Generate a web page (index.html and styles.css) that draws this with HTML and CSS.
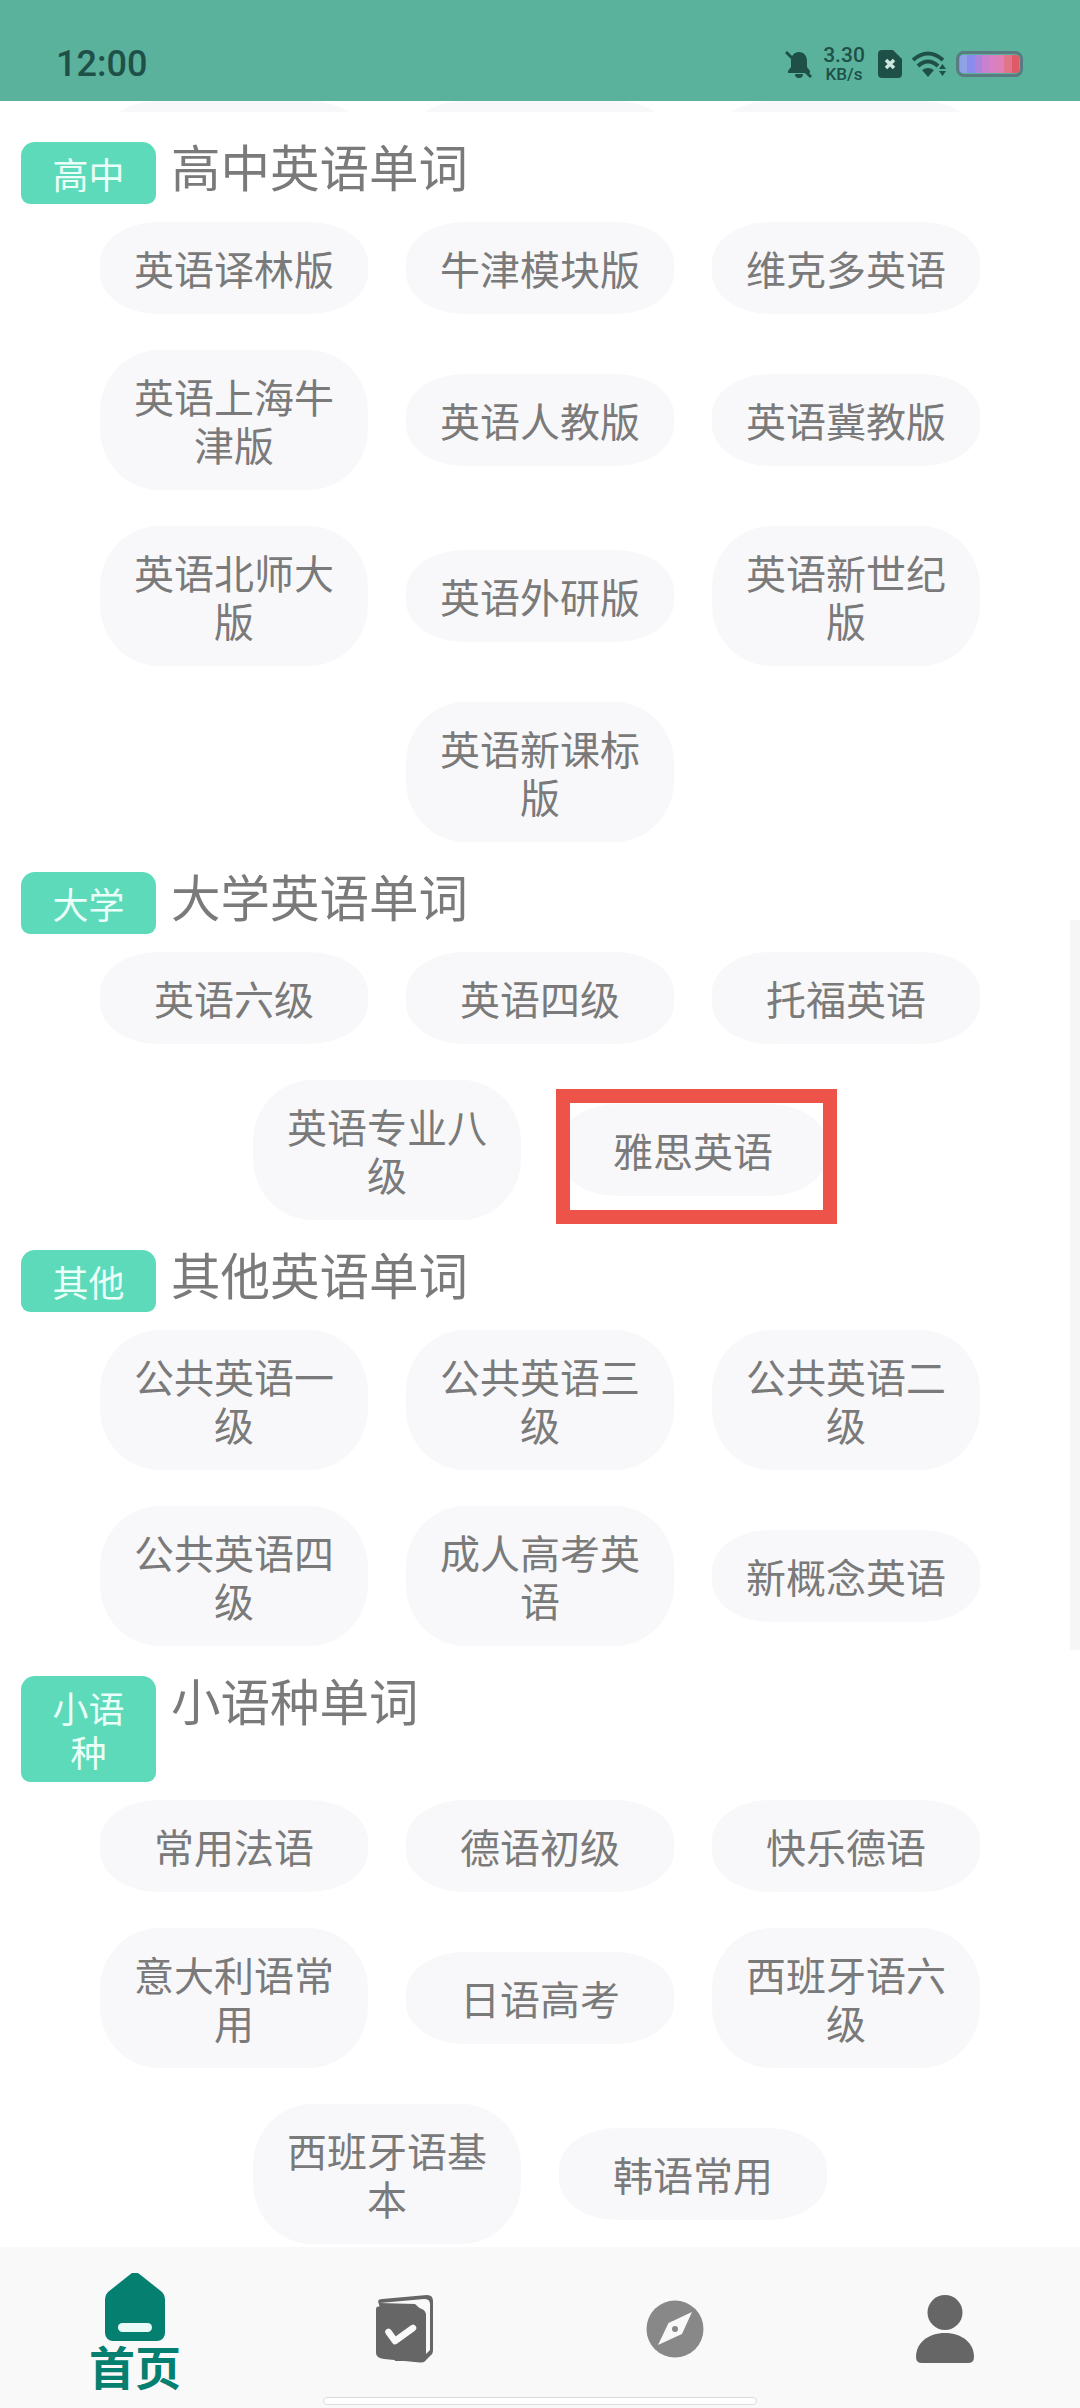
FILE: index.html
```html
<!DOCTYPE html>
<html lang="zh-CN">
<head>
    <meta charset="UTF-8">
    <meta name="viewport" content="width=device-width, initial-scale=1.0">
    <link rel="stylesheet" href="styles.css">
    <title>英语单词</title>
</head>
<body>
    <header class="status-bar">
        <span class="status-time">12:00</span>
        <div class="status-icons">
            <svg class="icon-bell" width="28" height="28" viewBox="0 0 28 28">
                <path d="M14 2c-5 0-8 4-8 9v6l-3 4v2h22v-2l-3-4v-6c0-5-3-9-8-9zM10 24a4 4 0 0 0 8 0z"/>
                <path class="bell-slash" d="M1 2l25 25"/>
            </svg>
            <div class="status-speed">
                <span class="speed-value">3.30</span>
                <span class="speed-unit">KB/s</span>
            </div>
            <svg class="icon-sim" width="24" height="28" viewBox="0 0 24 28">
                <path d="M4 0h11l9 9v15a4 4 0 0 1-4 4H4a4 4 0 0 1-4-4V4a4 4 0 0 1 4-4z"/>
                <path class="sim-x" d="M8 10l8 8M16 10l-8 8"/>
            </svg>
            <svg class="icon-wifi" width="34" height="26" viewBox="0 0 34 26">
                <path class="wifi-arc" d="M1 9Q16-4 31 9M6 15Q16 6 26 15"/>
                <path d="M10 19Q16 15 22 19L16 26zM27 18l3.500-5 3.500 5zM27 20h7l-3.500 5z"/>
            </svg>
            <div class="battery"><div class="battery-level"></div></div>
        </div>
    </header>

    <main class="word-list">
        <div class="chips chips-peek">
            <div class="chip chip-empty"></div>
            <div class="chip chip-empty"></div>
            <div class="chip chip-empty"></div>
        </div>

        <section class="group">
            <div class="group-head">
                <span class="tag">高中</span>
                <h2 class="group-title">高中英语单词</h2>
            </div>
            <div class="chips">
                <div class="chip">英语译林版</div>
                <div class="chip">牛津模块版</div>
                <div class="chip">维克多英语</div>
                <div class="chip">英语上海牛津版</div>
                <div class="chip">英语人教版</div>
                <div class="chip">英语冀教版</div>
                <div class="chip">英语北师大版</div>
                <div class="chip">英语外研版</div>
                <div class="chip">英语新世纪版</div>
                <div class="chip">英语新课标版</div>
            </div>
        </section>

        <section class="group">
            <div class="group-head">
                <span class="tag">大学</span>
                <h2 class="group-title">大学英语单词</h2>
            </div>
            <div class="chips">
                <div class="chip">英语六级</div>
                <div class="chip">英语四级</div>
                <div class="chip">托福英语</div>
                <div class="chip">英语专业八级</div>
                <div class="chip chip-marked">雅思英语</div>
            </div>
        </section>

        <section class="group">
            <div class="group-head">
                <span class="tag">其他</span>
                <h2 class="group-title">其他英语单词</h2>
            </div>
            <div class="chips">
                <div class="chip">公共英语一级</div>
                <div class="chip">公共英语三级</div>
                <div class="chip">公共英语二级</div>
                <div class="chip">公共英语四级</div>
                <div class="chip">成人高考英语</div>
                <div class="chip">新概念英语</div>
            </div>
        </section>

        <section class="group">
            <div class="group-head">
                <span class="tag">小语种</span>
                <h2 class="group-title">小语种单词</h2>
            </div>
            <div class="chips">
                <div class="chip">常用法语</div>
                <div class="chip">德语初级</div>
                <div class="chip">快乐德语</div>
                <div class="chip">意大利语常用</div>
                <div class="chip">日语高考</div>
                <div class="chip">西班牙语六级</div>
                <div class="chip">西班牙语基本</div>
                <div class="chip">韩语常用</div>
            </div>
        </section>
    </main>

    <div class="scroll-thumb"></div>

    <nav class="tab-bar">
        <div class="tabs">
            <div class="tab tab-active">
                <svg width="60" height="68" viewBox="0 0 60 68">
                    <path class="home-shape" d="M25 1.500a7 7 0 0 1 10 0L57 19q3 3 3 7v34a8 8 0 0 1-8 8H8a8 8 0 0 1-8-8V26q0-4 3-7z"/>
                    <rect class="home-dash" x="13" y="50" width="34" height="9" rx="4.500"/>
                </svg>
                <span class="tab-label">首页</span>
            </div>
            <div class="tab">
                <svg width="60" height="72" viewBox="0 0 60 72">
                    <path class="icon-dark" d="M3 7Q4 5 7 5L52 1q6 0 6 6v50q0 3-3 5l-5 5H20z"/>
                    <path class="icon-page" d="M5 9L49 5q6 0 6 5v46l-4 4V20L40 10z"/>
                    <path class="icon-dark" d="M1 15q0-3 3-2.500L43 14q8 1 8 7v43q0 5-6 4.500L9 65q-8-1-8-6z"/>
                    <path class="book-check" d="M13.500 38L20 47 38 34"/>
                </svg>
            </div>
            <div class="tab">
                <svg width="60" height="72" viewBox="0 0 60 72">
                    <circle class="icon-mid" cx="30" cy="35" r="28.500"/>
                    <path class="icon-page" d="M47 18L23.500 29 13 51 37 40z"/>
                    <circle class="icon-mid" cx="30" cy="35" r="3"/>
                </svg>
            </div>
            <div class="tab">
                <svg width="60" height="72" viewBox="0 0 60 72">
                    <circle class="icon-dark" cx="30" cy="18.500" r="17.500"/>
                    <path class="icon-dark" d="M1 63C1 49 13 39 30 39S59 49 59 63q0 6-6 6H7q-6 0-6-6z"/>
                </svg>
            </div>
        </div>
        <div class="home-bar"></div>
    </nav>
</body>
</html>
```

FILE: styles.css
```css
* {
    box-sizing: border-box;
}

body {
    font-family: "Noto Sans CJK SC", "Noto Sans", sans-serif;
    background: #ffffff;
    color: #7a7a7a;
    margin: 0;
    width: 1080px;
    height: 2408px;
    display: flex;
    flex-direction: column;
    overflow: hidden;
    position: relative;
}

/* status bar */
.status-bar {
    background: #5ab19c;
    color: #1f5048;
    height: 101px;
    flex: none;
    display: flex;
    align-items: center;
    justify-content: space-between;
    padding: 26px 57px 0 56px;
}

.status-time {
    font-family: Roboto, sans-serif;
    font-size: 36px;
    font-weight: 500;
}

.status-icons {
    display: flex;
    align-items: center;
}

.status-icons svg {
    fill: #1f5048;
    display: block;
}

.bell-slash {
    stroke: #1f5048;
    stroke-width: 3;
    fill: none;
}

.status-speed {
    font-family: Roboto, sans-serif;
    font-weight: 500;
    display: flex;
    flex-direction: column;
    align-items: center;
    width: 44px;
    margin: 0 12px 0 9px;
}

.speed-value {
    font-size: 21px;
    line-height: 21px;
}

.speed-unit {
    font-size: 17px;
    line-height: 17px;
}

.status-icons .sim-x {
    stroke: #cfe6df;
    stroke-width: 3.500;
    fill: none;
}

.icon-wifi {
    margin: 0 10px 0 10px;
}

.status-icons .wifi-arc {
    fill: none;
    stroke: #1f5048;
    stroke-width: 4;
}

.battery {
    width: 67px;
    height: 26px;
    border: 3px solid #5a7b80;
    border-radius: 8px;
    padding: 1px;
}

.battery-level {
    height: 100%;
    border-radius: 3px;
    background: linear-gradient(to right,
        #8fa2e6 0 12%, #8c8cf0 12% 25%, #ab84dc 25% 38%, #c880d0 38% 50%,
        #d980c4 50% 63%, #e07fb4 63% 75%, #e07488 75% 88%, #e05a66 88% 100%);
}

/* word groups */
.word-list {
    flex: 1;
    overflow: hidden;
}

.group {
    margin-top: 30px;
}

.group-head {
    display: flex;
    align-items: flex-start;
    gap: 15px;
    padding-left: 21px;
    margin-bottom: 18px;
}

.tag {
    width: 135px;
    flex: none;
    background: #5ddab9;
    color: #eafff8;
    font-size: 36px;
    line-height: 44px;
    text-align: center;
    padding: 9px 24px;
    border-radius: 14px 14px 9px 9px;
}

.group-title {
    font-size: 49.500px;
    font-weight: 400;
    line-height: 48px;
    margin: 0;
}

.chips {
    display: flex;
    flex-wrap: wrap;
    justify-content: center;
    align-items: center;
    gap: 36px 38px;
}

.chips-peek {
    height: 11px;
    overflow: hidden;
    align-items: flex-end;
}

.chip {
    width: 268px;
    background: #f8f8fa;
    font-size: 40px;
    line-height: 48px;
    text-align: center;
    padding: 22px 31px;
    border-radius: 22% / 44%;
    position: relative;
}

.chip-empty {
    height: 92px;
}

.chip-marked::after {
    content: "";
    position: absolute;
    top: -15px;
    left: -3px;
    right: -10px;
    bottom: -28px;
    border: 14px solid #ee5349;
}

.scroll-thumb {
    position: absolute;
    top: 920px;
    right: 0;
    width: 10px;
    height: 730px;
    background: #f6f6f6;
}

/* bottom tabs */
.tab-bar {
    background: #f9f9fa;
    height: 161px;
    flex: none;
}

.tabs {
    display: grid;
    grid-template-columns: repeat(4, 270px);
    height: 150px;
}

.tab {
    display: flex;
    flex-direction: column;
    align-items: center;
    padding-top: 47px;
}

.tab svg {
    display: block;
    flex: none;
}

.tab-active {
    padding-top: 26px;
}

.tab-label {
    color: #047f70;
    font-size: 46px;
    font-weight: 700;
    line-height: 48px;
}

.home-shape {
    fill: #047f70;
}

.home-dash {
    fill: #e9fbf7;
}

.icon-dark {
    fill: #666666;
}

.icon-mid {
    fill: #888888;
}

.icon-page {
    fill: #f9f9fa;
}

.book-check {
    fill: none;
    stroke: #f9f9fa;
    stroke-width: 6.500;
    stroke-linecap: round;
    stroke-linejoin: round;
}

.home-bar {
    width: 434px;
    height: 8px;
    margin: 0 auto;
    background: #ffffff;
    border: 1px solid #dcdcdf;
    border-radius: 4px;
}
```
